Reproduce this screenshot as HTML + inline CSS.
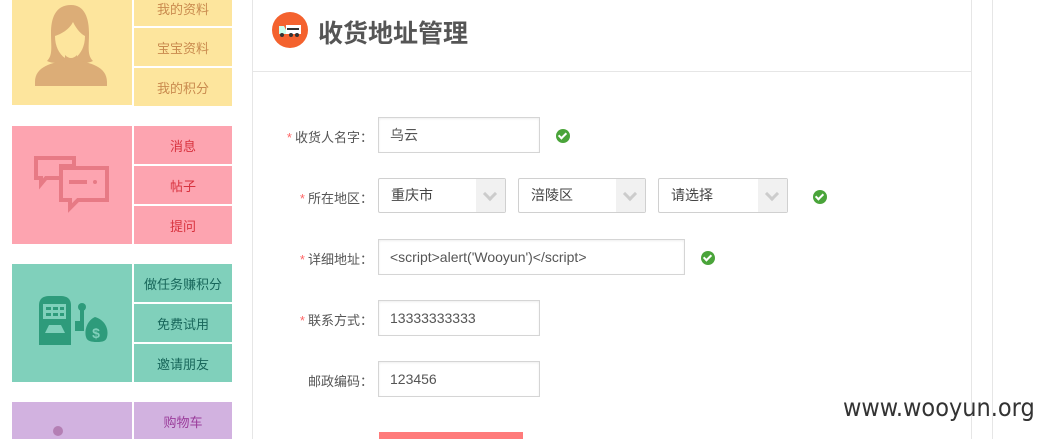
<!DOCTYPE html>
<html><head><meta charset="utf-8"><style>
body{margin:0;width:1049px;height:439px;overflow:hidden;background:#fff;position:relative;font-family:"Liberation Sans","Noto Sans CJK SC",sans-serif;}
.a{position:absolute;}
.s{position:absolute;left:134px;width:98px;text-align:center;font-size:13px;}
.lbl{position:absolute;width:120px;left:253px;text-align:right;font-size:13px;color:#555;}
.lbl i{font-style:normal;color:#f66;margin-right:3px;}
.in{position:absolute;left:378px;border:1px solid #d5d5d5;box-sizing:border-box;font-size:14px;color:#555;padding-left:11px;box-shadow:inset 0 1px 2px #eee;}
.sel{position:absolute;top:178px;height:35px;border:1px solid #d0d0d0;border-radius:2px;box-sizing:border-box;font-size:14px;color:#444;padding-left:12px;line-height:33px;}
.sel b{position:absolute;right:0;top:0;width:29px;height:33px;background:#f1f1f1;}
.sel b:after{content:"";position:absolute;left:9px;top:10px;width:7px;height:7px;border-right:3px solid #ccc;border-bottom:3px solid #ccc;transform:rotate(45deg);}
.ok{position:absolute;width:14px;height:14px;border-radius:50%;background:#4aa43a;}
.ok:after{content:"";position:absolute;left:4px;top:2px;width:3px;height:6px;border-right:2px solid #fff;border-bottom:2px solid #fff;transform:rotate(45deg);}
</style></head><body>
<div class="a" style="left:12px;top:0;width:120px;height:105px;background:#fde59d"></div>
<svg class="a" style="left:33px;top:2px" width="76" height="86" viewBox="0 0 76 86"><path d="M38 3c-16 0-20 14-20 28 0 14 2 22-4 28 6 3 14 2 18 0l0-3c-6-4-10-12-10-22 6-2 14-6 18-14 4 8 8 12 12 14 0 10-4 18-10 22v3c4 2 12 3 18 0-6-6-4-14-4-28 0-14-4-28-18-28z" fill="#dcad77"/><path d="M32 53v5c-12 3-30 6-30 22v4h72v-4c0-16-18-19-30-22v-5c-4 4-8 4-12 0z" fill="#dcad77"/></svg>
<div class="a" style="left:134px;top:0;width:98px;height:26px;background:#fde59d"></div>
<div class="a" style="left:134px;top:28px;width:98px;height:38px;background:#fde59d"></div>
<div class="a" style="left:134px;top:68px;width:98px;height:38px;background:#fde59d"></div>
<div class="s" style="top:-1px;color:#c98a4e">我的资料</div>
<div class="s" style="top:38px;color:#c98a4e">宝宝资料</div>
<div class="s" style="top:78px;color:#c98a4e">我的积分</div>

<div class="a" style="left:12px;top:126px;width:120px;height:118px;background:#fda4b0"></div>
<svg class="a" style="left:34px;top:156px" width="78" height="58" viewBox="0 0 78 58"><path d="M2 2h38v8H27v12h-15l-5 6v-6H2z" fill="none" stroke="#e77a85" stroke-width="4"/><path d="M27 12h46v32H44l-8 8v-8h-9z" fill="none" stroke="#e77a85" stroke-width="4"/><rect x="35" y="24" width="18" height="4" fill="#e77a85"/><circle cx="61" cy="26" r="2" fill="#e77a85"/></svg>
<div class="a" style="left:134px;top:126px;width:98px;height:38px;background:#fda4b0"></div>
<div class="a" style="left:134px;top:166px;width:98px;height:38px;background:#fda4b0"></div>
<div class="a" style="left:134px;top:206px;width:98px;height:38px;background:#fda4b0"></div>
<div class="s" style="top:136px;color:#d8323e">消息</div>
<div class="s" style="top:176px;color:#d8323e">帖子</div>
<div class="s" style="top:216px;color:#d8323e">提问</div>

<div class="a" style="left:12px;top:264px;width:120px;height:118px;background:#80d0bb"></div>
<svg class="a" style="left:37px;top:295px" width="74" height="50" viewBox="0 0 74 50"><path d="M2 10c0-6 4-9 10-9h12c6 0 10 3 10 9v40H2z" fill="#2e9b7b"/><rect x="6" y="9" width="23" height="15" fill="#80d0bb"/><path d="M9 12h5v3H9zM16 12h5v3h-5zM23 12h4v3h-4zM9 18h5v3H9zM16 18h5v3h-5zM23 18h4v3h-4z" fill="#2e9b7b"/><path d="M8 38l4-8h12l4 8z" fill="#80d0bb"/><circle cx="45" cy="12" r="4" fill="#2e9b7b"/><rect x="43" y="14" width="4" height="22" fill="#2e9b7b"/><rect x="38" y="26" width="6" height="10" fill="#2e9b7b"/><path d="M56 18l2 4c10 3 14 12 12 20-1 4-4 5-10 5s-10-1-11-5c-2-8 2-17 9-20z" fill="#2e9b7b"/><text x="59" y="43" font-size="14" font-weight="bold" fill="#80d0bb" text-anchor="middle" font-family="Liberation Sans">$</text></svg>
<div class="a" style="left:134px;top:264px;width:98px;height:38px;background:#80d0bb"></div>
<div class="a" style="left:134px;top:304px;width:98px;height:38px;background:#80d0bb"></div>
<div class="a" style="left:134px;top:344px;width:98px;height:38px;background:#80d0bb"></div>
<div class="s" style="top:274px;color:#17665a">做任务赚积分</div>
<div class="s" style="top:314px;color:#17665a">免费试用</div>
<div class="s" style="top:354px;color:#17665a">邀请朋友</div>

<div class="a" style="left:12px;top:402px;width:120px;height:37px;background:#d2b2e0"></div>
<div class="a" style="left:53px;top:426px;width:10px;height:10px;border-radius:50%;background:#b47fb4"></div>
<div class="a" style="left:134px;top:402px;width:98px;height:37px;background:#d2b2e0"></div>
<div class="s" style="top:412px;color:#9b3d9b">购物车</div>

<div class="a" style="left:252px;top:0;width:1px;height:439px;background:#e6e6e6"></div>
<div class="a" style="left:971px;top:0;width:1px;height:439px;background:#e6e6e6"></div>
<div class="a" style="left:992px;top:0;width:1px;height:439px;background:#e6e6e6"></div>
<div class="a" style="left:253px;top:71px;width:718px;height:1px;background:#e6e6e6"></div>
<div class="a" style="left:272px;top:12px;width:36px;height:36px;border-radius:50%;background:#f4622e"></div>
<svg class="a" style="left:278px;top:22px" width="24" height="16" viewBox="0 0 24 16"><path d="M1 4h5l2 4v4H1z" fill="#cfe"/><rect x="8" y="3" width="15" height="9" fill="#fff"/><rect x="9" y="6" width="12" height="2" fill="#333"/><circle cx="4" cy="13" r="2" fill="#333"/><circle cx="13" cy="13" r="2" fill="#333"/><circle cx="19" cy="13" r="2" fill="#333"/></svg>
<div class="a" style="left:318px;top:14px;font-size:25px;font-weight:bold;color:#555">收货地址管理</div>

<div class="lbl" style="top:127px"><i>*</i>收货人名字：</div>
<div class="in" style="top:117px;width:162px;height:36px;line-height:34px">乌云</div>
<div class="ok" style="left:556px;top:129px"></div>

<div class="lbl" style="top:188px"><i>*</i>所在地区：</div>
<div class="sel" style="left:378px;width:128px">重庆市<b></b></div>
<div class="sel" style="left:518px;width:128px">涪陵区<b></b></div>
<div class="sel" style="left:658px;width:130px">请选择<b></b></div>
<div class="ok" style="left:813px;top:190px"></div>

<div class="lbl" style="top:249px"><i>*</i>详细地址：</div>
<div class="in" style="top:239px;width:307px;height:36px;line-height:34px;font-size:14px">&lt;script&gt;alert('Wooyun')&lt;/script&gt;</div>
<div class="ok" style="left:701px;top:251px"></div>

<div class="lbl" style="top:310px"><i>*</i>联系方式：</div>
<div class="in" style="top:300px;width:162px;height:36px;line-height:34px">13333333333</div>

<div class="lbl" style="top:371px">邮政编码：</div>
<div class="in" style="top:361px;width:162px;height:36px;line-height:34px">123456</div>

<div class="a" style="left:379px;top:432px;width:144px;height:7px;background:#ff7b7b"></div>
<div class="a" style="left:843px;top:393px;font-size:25px;color:#333;font-family:'DejaVu Sans Condensed','Liberation Sans',sans-serif">www.wooyun.org</div>
</body></html>
